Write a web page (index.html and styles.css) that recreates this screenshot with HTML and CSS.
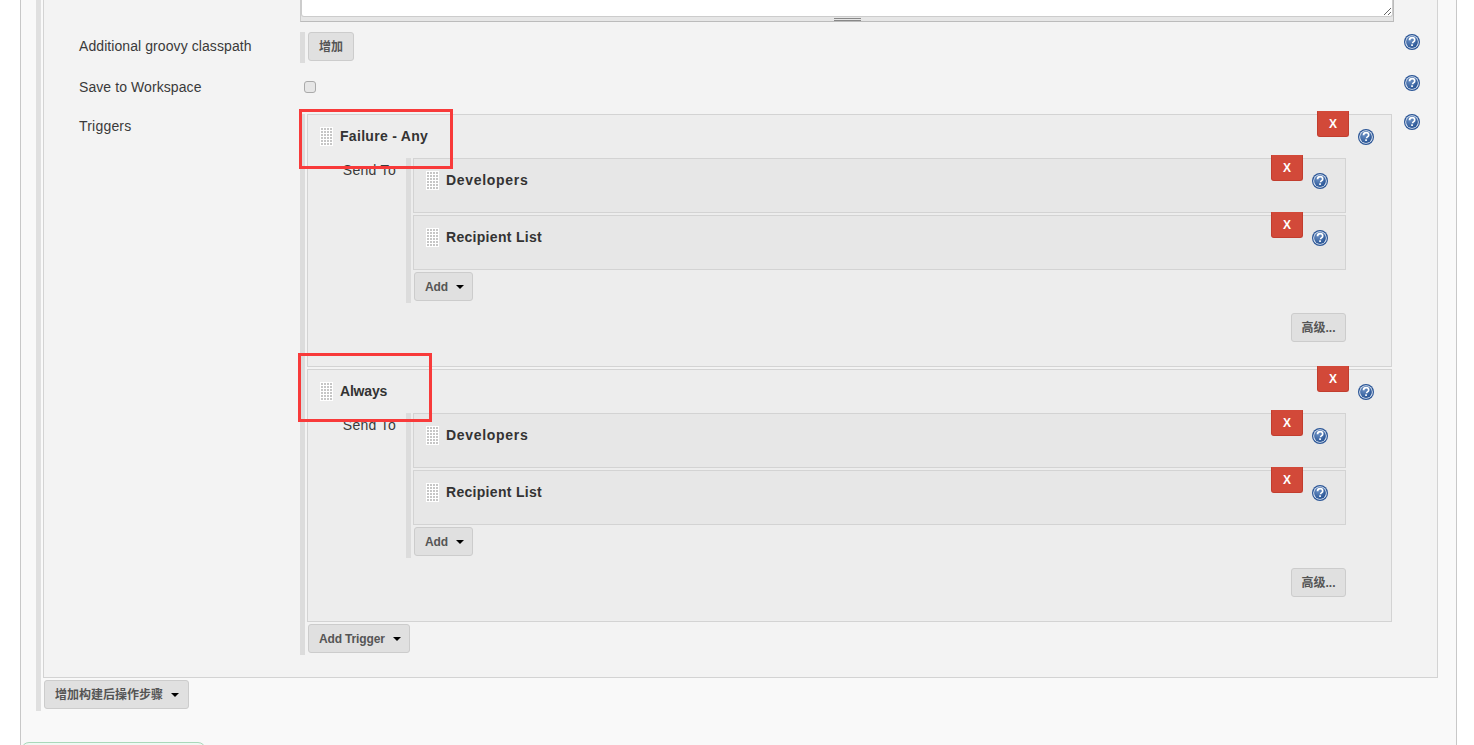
FILE: index.html
```html
<!DOCTYPE html>
<html lang="zh">
<head>
<meta charset="utf-8">
<title>Editable Email Notification</title>
<link rel="stylesheet" href="styles.css">
</head>
<body>
<svg class="defs" width="0" height="0" aria-hidden="true">
  <defs>
    <radialGradient id="helpfill" cx="35%" cy="30%" r="85%">
      <stop offset="0" stop-color="#6b90c4"/>
      <stop offset="1" stop-color="#1f4c8e"/>
    </radialGradient>
    <symbol id="help" viewBox="0 0 16 16">
      <circle cx="8" cy="8" r="8" fill="#2a5596"/>
      <circle cx="8" cy="8" r="6.8" fill="#e4ebf5"/>
      <circle cx="8" cy="8" r="5.9" fill="url(#helpfill)"/>
      <path d="M5.5 6.2C5.6 4.5 6.8 3.7 8.1 3.7c1.6 0 2.6.9 2.6 2.2 0 1.1-.7 1.6-1.3 2-.6.4-.8.7-.8 1.4" fill="none" stroke="#fff" stroke-width="1.7"/>
      <rect x="7.2" y="10.3" width="1.7" height="1.7" fill="#fff"/>
    </symbol>
  </defs>
</svg>
<div class="page">
  <div class="section">
    <div class="box">
      <div class="row row-text">
        <div></div>
        <div class="text-field">
          <textarea class="area" aria-label="script"></textarea>
          <div class="grabber"><span class="grip"></span></div>
        </div>
        <div></div>
      </div>

      <div class="row row-classpath">
        <div class="label label-a">Additional groovy classpath</div>
        <div class="barred"><button class="btn">增加</button></div>
        <svg class="help help-row help-a"><use href="#help"/></svg>
      </div>

      <div class="row row-save">
        <div class="label label-b">Save to Workspace</div>
        <div><input class="check" type="checkbox" aria-label="Save to Workspace"></div>
        <svg class="help help-row"><use href="#help"/></svg>
      </div>

      <div class="row row-triggers">
        <div class="label label-b label-trig">Triggers</div>
        <div class="barred triggers">
          <div class="item">
            <div class="head"><span class="handle"></span><b class="title">Failure - Any</b></div>
            <button class="del">X</button>
            <svg class="help help-item"><use href="#help"/></svg>
            <div class="send">
              <div class="send-label">Send To</div>
              <div class="barred subs">
                <div class="sub">
                  <div class="head"><span class="handle"></span><b class="title title-wide">Developers</b></div>
                  <button class="del">X</button>
                  <svg class="help help-item"><use href="#help"/></svg>
                </div>
                <div class="sub">
                  <div class="head"><span class="handle"></span><b class="title">Recipient List</b></div>
                  <button class="del">X</button>
                  <svg class="help help-item"><use href="#help"/></svg>
                </div>
                <button class="btn btn-drop btn-add">Add<i class="caret"></i></button>
              </div>
            </div>
            <div class="adv"><button class="btn btn-adv">高级...</button></div>
            <div class="mark mark-one"></div>
          </div>

          <div class="item">
            <div class="head"><span class="handle"></span><b class="title title-narrow">Always</b></div>
            <button class="del">X</button>
            <svg class="help help-item"><use href="#help"/></svg>
            <div class="send">
              <div class="send-label">Send To</div>
              <div class="barred subs">
                <div class="sub">
                  <div class="head"><span class="handle"></span><b class="title title-wide">Developers</b></div>
                  <button class="del">X</button>
                  <svg class="help help-item"><use href="#help"/></svg>
                </div>
                <div class="sub">
                  <div class="head"><span class="handle"></span><b class="title">Recipient List</b></div>
                  <button class="del">X</button>
                  <svg class="help help-item"><use href="#help"/></svg>
                </div>
                <button class="btn btn-drop btn-add">Add<i class="caret"></i></button>
              </div>
            </div>
            <div class="adv"><button class="btn btn-adv">高级...</button></div>
            <div class="mark mark-two"></div>
          </div>

          <button class="btn btn-drop btn-trigger">Add Trigger<i class="caret"></i></button>
        </div>
        <svg class="help help-row"><use href="#help"/></svg>
      </div>
    </div>
    <button class="btn btn-drop btn-post">增加构建后操作步骤<i class="caret"></i></button>
  </div>
  <div class="save-strip"></div>
</div>
</body>
</html>
```

FILE: styles.css
```css
* { box-sizing: border-box; }

html, body {
  margin: 0;
  height: 745px;
  overflow: hidden;
  background: #fff;
}

body {
  font-family: "Liberation Sans", "Noto Sans CJK SC", Arial, sans-serif;
  font-size: 14px;
  line-height: 16px;
  color: #3a3a3a;
}

.defs { position: absolute; }

.page {
  margin: 0 17px 0 20px;
  height: 745px;
  overflow: hidden;
  background: #f9f9f9;
  border-left: 1px solid #c8c8c8;
  border-right: 1px solid #c8c8c8;
  padding-left: 15px;
}

.section {
  border-left: 5px solid #e0e0e0;
  padding-left: 2px;
  padding-bottom: 2px;
}

.box {
  width: 1395px;
  height: 678px;
  background: #f3f3f3;
  border-right: 1px solid #d3d3d3;
  border-bottom: 1px solid #d3d3d3;
  border-left: 1px solid #d3d3d3;
}

.row {
  display: grid;
  grid-template-columns: 221px 1094px 42px;
  padding-left: 35px;
}

.row-text { height: 22px; }
.row-classpath { margin-top: 10px; }
.row-save { margin-top: 12px; }
.row-triggers { margin-top: 19px; }

.label { letter-spacing: 0.08px; }
.label-a { padding-top: 6px; }
.label-b { padding-top: 4px; }
.label-trig { letter-spacing: 0.2px; }

.text-field {
  height: 22px;
  border-bottom: 1px solid #bbb;
  border-right: 1px solid #bbb;
  border-left: 1px solid #ccc;
  background: #e6e6e6;
}

.area {
  display: block;
  width: 100%;
  height: 17px;
  min-height: 17px;
  margin: 0;
  padding: 0;
  background: #fff;
  border: 1px solid #ccc;
  border-top: 0;
  border-radius: 0 0 3px 3px;
  resize: vertical;
  outline: 0;
}

.grabber {
  display: flex;
  justify-content: center;
  padding-top: 1px;
}

.grip {
  width: 27px;
  height: 3px;
  border-top: 1px solid #888;
  border-bottom: 1px solid #888;
}

.barred {
  border-left: 5px solid #dcdcdc;
  padding-left: 3px;
}

.row-classpath .barred {
  height: 31px;
}

.btn {
  display: block;
  height: 29px;
  margin: 0;
  padding: 0 10px;
  font: bold 12px/16px "Liberation Sans", "Noto Sans CJK SC", Arial, sans-serif;
  color: #555;
  background: #e0e0e0;
  border: 1px solid #ccc;
  border-radius: 3px;
}

.btn-drop {
  display: flex;
  align-items: center;
}

.caret {
  width: 0;
  height: 0;
  margin-left: 8px;
  margin-right: -1px;
  border-top: 4px solid #000;
  border-left: 4px solid transparent;
  border-right: 4px solid transparent;
}

.check {
  display: block;
  width: 12px;
  height: 12px;
  margin: 6px 0 0 4px;
  appearance: none;
  background: #e6e6e6;
  border: 1px solid #aaa;
  border-radius: 3px;
}

.help {
  display: block;
  width: 16px;
  height: 16px;
}

.help-row { margin-left: 10px; }
.help-a { margin-top: 2px; }

.triggers {
  height: 541px;
  padding-left: 2px;
}

.item {
  position: relative;
  width: 1085px;
  height: 253px;
  margin-bottom: 2px;
  background: #ededed;
  border: 1px solid #d3d3d3;
}

.head {
  display: flex;
  align-items: center;
  gap: 7px;
  padding: 12px;
}

.handle {
  flex: none;
  width: 13px;
  height: 19px;
  background-color: #fff;
  background-image: conic-gradient(at 2px 2px, #fff 0 270deg, #c6c6c6 270deg);
  background-position: 1px 1px;
  background-size: 3px 3px;
}

.title {
  padding-bottom: 2px;
  font-size: 14px;
  letter-spacing: 0.3px;
  color: #333;
}

.title-wide { letter-spacing: 0.7px; }
.title-narrow { letter-spacing: -0.2px; }

.del {
  position: absolute;
  top: -4px;
  right: 42px;
  width: 32px;
  height: 26px;
  padding: 0;
  font: bold 12px/16px "Liberation Sans", Arial, sans-serif;
  color: #fff;
  background: #d24939;
  border: 1px solid #c23d2e;
  border-top-color: #d24939;
  border-radius: 0 0 3px 3px;
}

.help-item {
  position: absolute;
  top: 14px;
  right: 17px;
}

.send {
  display: grid;
  grid-template-columns: 98px 1fr;
}

.send-label {
  padding: 4px 10px 0 0;
  text-align: right;
  letter-spacing: 0.3px;
}

.subs {
  height: 145px;
  padding-left: 2px;
}

.sub {
  position: relative;
  width: 933px;
  height: 55px;
  margin-bottom: 2px;
  background: #e7e7e7;
  border: 1px solid #d3d3d3;
}

.btn-add {
  margin-left: 1px;
  padding: 0 9px 0 10px;
  letter-spacing: -0.15px;
}

.adv {
  display: flex;
  justify-content: flex-end;
  width: 1038px;
  margin-top: 10px;
}

.btn-adv { width: 55px; padding: 0; }

.btn-trigger {
  margin-left: 1px;
  padding: 0 9px 0 10px;
  letter-spacing: -0.15px;
}

.btn-post {
  margin: 2px 0 0 1px;
  padding: 0 10px;
}

.mark {
  position: absolute;
  border: 3px solid #f83a3a;
  pointer-events: none;
}

.mark-one {
  top: -6px;
  left: -9px;
  width: 154px;
  height: 60px;
}

.mark-two {
  top: -17px;
  left: -10px;
  width: 134px;
  height: 69px;
}

.save-strip {
  width: 185px;
  height: 20px;
  margin: 31px 0 0 -15px;
  background: #f1f8f3;
  border: 1px solid #a9d8ba;
  border-radius: 8px 8px 0 0;
}
```
